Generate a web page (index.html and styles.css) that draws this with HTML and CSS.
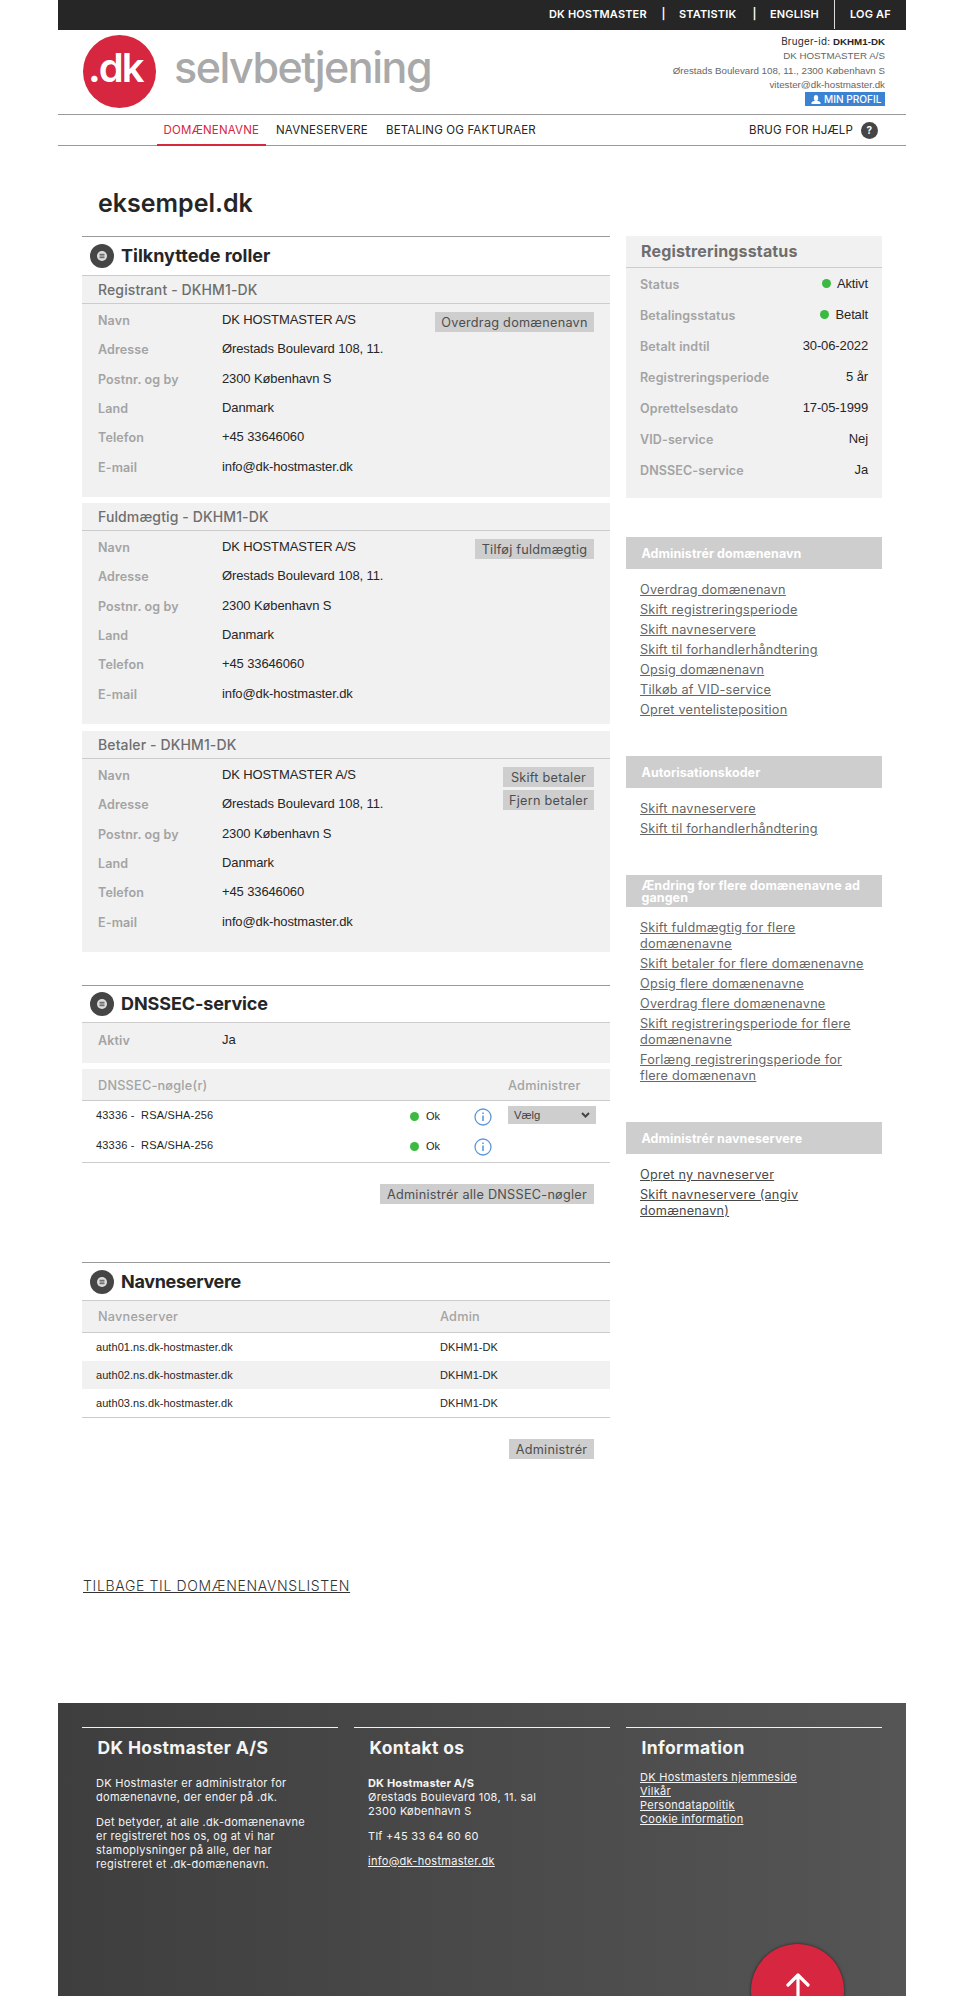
FILE: index.html
```
<!DOCTYPE html>
<html lang="da">
<head>
<meta charset="utf-8">
<title>eksempel.dk - selvbetjening</title>
<link rel="stylesheet" href="styles.css">
</head>
<body>
<svg width="0" height="0" class="defs">
  <symbol id="section-icon" viewBox="0 0 24 24">
    <circle cx="12" cy="12" r="12" fill="#454545"/>
    <circle cx="12" cy="12" r="5" fill="#ddd"/>
    <path d="M9.5 10.3h5M9.5 12h5M9.5 13.7h5" stroke="#555" stroke-width="1"/>
  </symbol>
  <symbol id="info-icon" viewBox="0 0 18 18">
    <circle cx="9" cy="9" r="8" fill="#fff" stroke="#5d98da" stroke-width="1.3"/>
    <path d="M9 7.5v5.5M9 4.6v1.3" stroke="#3c82d2" stroke-width="1.3"/>
  </symbol>
</svg>
<div class="page">
  <div class="topbar">
    <a class="t1">DK HOSTMASTER</a><span class="bar">|</span><a class="t2">STATISTIK</a><span class="bar">|</span><a class="t3">ENGLISH</a><a class="logout">LOG AF</a>
  </div>
  <header class="header">
    <div class="logo"><span class="logo-dot">.dk</span><span class="logo-name">selvbetjening</span></div>
    <div class="user">
      <div class="user-id"><span>Bruger-id:</span> <b>DKHM1-DK</b></div>
      <div>DK HOSTMASTER A/S</div>
      <div>Ørestads Boulevard 108, 11., 2300 København S</div>
      <div>vitester@dk-hostmaster.dk</div>
      <a class="profile"><svg width="10" height="9" viewBox="0 0 10 9"><ellipse cx="5" cy="3" rx="2.2" ry="3" fill="#fff"/><path d="M.5 9V7.6Q1 6.4 3.6 5.8h2.8Q9 6.4 9.5 7.6V9z" fill="#fff"/></svg>MIN PROFIL</a>
    </div>
  </header>
  <nav class="nav">
    <a class="active">DOMÆNENAVNE</a><a>NAVNESERVERE</a><a>BETALING OG FAKTURAER</a>
    <span class="help">BRUG FOR HJÆLP <i>?</i></span>
  </nav>
  <h1>eksempel.dk</h1>
  <div class="columns">
    <main class="main">
      <section>
        <h2><svg width="24" height="24"><use href="#section-icon"/></svg><span class="h-roles">Tilknyttede roller</span></h2>
        <div class="card">
          <h3>Registrant - DKHM1-DK</h3>
          <div class="card-body">
            <dl>
              <dt>Navn</dt><dd>DK HOSTMASTER A/S</dd>
              <dt>Adresse</dt><dd>Ørestads Boulevard 108, 11.</dd>
              <dt>Postnr. og by</dt><dd>2300 København S</dd>
              <dt>Land</dt><dd>Danmark</dd>
              <dt>Telefon</dt><dd>+45 33646060</dd>
              <dt>E-mail</dt><dd>info@dk-hostmaster.dk</dd>
            </dl>
            <div class="actions"><a class="btn w159">Overdrag domænenavn</a></div>
          </div>
        </div>
        <div class="card second">
          <h3>Fuldmægtig - DKHM1-DK</h3>
          <div class="card-body">
            <dl>
              <dt>Navn</dt><dd>DK HOSTMASTER A/S</dd>
              <dt>Adresse</dt><dd>Ørestads Boulevard 108, 11.</dd>
              <dt>Postnr. og by</dt><dd>2300 København S</dd>
              <dt>Land</dt><dd>Danmark</dd>
              <dt>Telefon</dt><dd>+45 33646060</dd>
              <dt>E-mail</dt><dd>info@dk-hostmaster.dk</dd>
            </dl>
            <div class="actions"><a class="btn w119">Tilføj fuldmægtig</a></div>
          </div>
        </div>
        <div class="card third">
          <h3>Betaler - DKHM1-DK</h3>
          <div class="card-body">
            <dl>
              <dt>Navn</dt><dd>DK HOSTMASTER A/S</dd>
              <dt>Adresse</dt><dd>Ørestads Boulevard 108, 11.</dd>
              <dt>Postnr. og by</dt><dd>2300 København S</dd>
              <dt>Land</dt><dd>Danmark</dd>
              <dt>Telefon</dt><dd>+45 33646060</dd>
              <dt>E-mail</dt><dd>info@dk-hostmaster.dk</dd>
            </dl>
            <div class="actions"><a class="btn w91">Skift betaler</a><a class="btn w91">Fjern betaler</a></div>
          </div>
        </div>
      </section>

      <section class="dnssec">
        <h2><svg width="24" height="24"><use href="#section-icon"/></svg><span class="h-dnssec">DNSSEC-service</span></h2>
        <dl class="active-row"><dt>Aktiv</dt><dd>Ja</dd></dl>
        <div class="key-head"><span>DNSSEC-nøgle(r)</span><span>Administrer</span></div>
        <div class="keys">
          <div class="key"><span class="algo">43336 -&nbsp; RSA/SHA-256</span><span class="ok"><i class="dot"></i>Ok</span><svg width="18" height="18"><use href="#info-icon"/></svg><span class="select">Vælg<svg width="9" height="6" viewBox="0 0 9 6"><path d="M1 1l3.5 3.5L8 1" fill="none" stroke="#444" stroke-width="2"/></svg></span></div>
          <div class="key"><span class="algo">43336 -&nbsp; RSA/SHA-256</span><span class="ok"><i class="dot"></i>Ok</span><svg width="18" height="18"><use href="#info-icon"/></svg></div>
        </div>
        <div class="after"><a class="btn w214">Administrér alle DNSSEC-nøgler</a></div>
      </section>

      <section class="servers">
        <h2><svg width="24" height="24"><use href="#section-icon"/></svg><span class="h-servers">Navneservere</span></h2>
        <div class="srv-head"><span>Navneserver</span><span>Admin</span></div>
        <div class="srv"><span>auth01.ns.dk-hostmaster.dk</span><span>DKHM1-DK</span></div>
        <div class="srv shaded"><span>auth02.ns.dk-hostmaster.dk</span><span>DKHM1-DK</span></div>
        <div class="srv last"><span>auth03.ns.dk-hostmaster.dk</span><span>DKHM1-DK</span></div>
        <div class="after"><a class="btn w85">Administrér</a></div>
      </section>
    </main>

    <aside class="side">
      <div class="status">
        <h3>Registreringsstatus</h3>
        <dl>
          <dt>Status</dt><dd><i class="dot"></i>Aktivt</dd>
          <dt>Betalingsstatus</dt><dd><i class="dot"></i>Betalt</dd>
          <dt>Betalt indtil</dt><dd>30-06-2022</dd>
          <dt>Registreringsperiode</dt><dd>5 år</dd>
          <dt>Oprettelsesdato</dt><dd>17-05-1999</dd>
          <dt>VID-service</dt><dd>Nej</dd>
          <dt>DNSSEC-service</dt><dd>Ja</dd>
        </dl>
      </div>
      <h4 class="g1">Administrér domænenavn</h4>
      <ul>
        <li><a>Overdrag domænenavn</a></li>
        <li><a>Skift registreringsperiode</a></li>
        <li><a>Skift navneservere</a></li>
        <li><a>Skift til forhandlerhåndtering</a></li>
        <li><a>Opsig domænenavn</a></li>
        <li><a>Tilkøb af VID-service</a></li>
        <li><a>Opret ventelisteposition</a></li>
      </ul>
      <h4 class="g2">Autorisationskoder</h4>
      <ul>
        <li><a>Skift navneservere</a></li>
        <li><a>Skift til forhandlerhåndtering</a></li>
      </ul>
      <h4 class="g3">Ændring for flere domænenavne ad<br>gangen</h4>
      <ul>
        <li><a>Skift fuldmægtig for flere<br>domænenavne</a></li>
        <li><a>Skift betaler for flere domænenavne</a></li>
        <li><a>Opsig flere domænenavne</a></li>
        <li><a>Overdrag flere domænenavne</a></li>
        <li><a>Skift registreringsperiode for flere<br>domænenavne</a></li>
        <li><a>Forlæng registreringsperiode for<br>flere domænenavn</a></li>
      </ul>
      <h4 class="g4">Administrér navneservere</h4>
      <ul class="dark">
        <li><a>Opret ny navneserver</a></li>
        <li><a>Skift navneservere (angiv<br>domænenavn)</a></li>
      </ul>
    </aside>
  </div>
  <a class="back">TILBAGE TIL DOMÆNENAVNSLISTEN</a>
  <footer class="footer">
    <div class="fcol">
      <h5>DK Hostmaster A/S</h5>
      <p>DK Hostmaster er administrator for<br>domænenavne, der ender på .dk.</p>
      <p>Det betyder, at alle .dk-domænenavne<br>er registreret hos os, og at vi har<br>stamoplysninger på alle, der har<br>registreret et .dk-domænenavn.</p>
    </div>
    <div class="fcol">
      <h5>Kontakt os</h5>
      <p><b>DK Hostmaster A/S</b><br>Ørestads Boulevard 108, 11. sal<br>2300 København S</p>
      <p>Tlf +45 33 64 60 60</p>
      <p><a>info@dk-hostmaster.dk</a></p>
    </div>
    <div class="fcol links">
      <h5>Information</h5>
      <p><a>DK Hostmasters hjemmeside</a><br><a>Vilkår</a><br><a>Persondatapolitik</a><br><a>Cookie information</a></p>
    </div>
    <a class="to-top"><svg width="24" height="34" viewBox="0 0 24 34"><path d="M12 33V2M2 12L12 2l10 10" fill="none" stroke="#fff" stroke-width="3.2" stroke-linecap="round" stroke-linejoin="round"/></svg></a>
  </footer>
</div>
</body>
</html>
```

FILE: styles.css
```
* { box-sizing: border-box; }
body, h1, h2, h3, h4, h5, p, ul, dl, dd { margin: 0; padding: 0; }
body {
  background: #fff;
  color: #262626;
  font-family: Inter, "Open Sans", sans-serif;
  font-size: 13px;
  height: 1996px;
  overflow: hidden;
}
i { font-style: normal; }
ul { list-style: none; }
.defs { position: absolute; }
.page { width: 848px; height: 1996px; margin: 0 auto; display: flex; flex-direction: column; overflow: hidden; }

.topbar {
  height: 30px;
  flex: none;
  background: #262626;
  color: #fff;
  display: flex;
  justify-content: flex-end;
  font-size: 11px;
  font-weight: 600;
  letter-spacing: .15px;
  line-height: 29px;
  white-space: nowrap;
}
.t1 { width: 99px; }
.bar { width: 31px; text-align: center; }
.t2 { width: 60px; }
.t3 { width: 64px; }
.logout { width: 72px; height: 29px; border-left: 1px solid #ddd; padding-left: 15px; }

.header { height: 84px; flex: none; display: flex; justify-content: space-between; padding: 5px 21px 0 25px; }
.logo { display: flex; }
.logo-dot {
  width: 73px; height: 73px;
  border-radius: 50%;
  background: #d7263f;
  color: #fff;
  font-size: 40px;
  font-weight: 600;
  line-height: 66px;
  letter-spacing: -2px;
  padding-left: 5px;
}
.logo-name { margin-left: 18px; font-size: 43px; font-weight: 500; line-height: 65px; letter-spacing: -1.5px; color: #a9a9a9; }
.user { text-align: right; font: 9.75px/14.33px "Liberation Sans", Arial, sans-serif; color: #666; display: flex; flex-direction: column; align-items: flex-end; }
.user-id { color: #262626; }
.user-id span { font-family: Inter, sans-serif; font-size: 9.8px; letter-spacing: .25px; }
.profile {
  width: 80px; height: 14px;
  background: #3c82d2; color: #fff;
  font: 500 10.1px/14px Inter, sans-serif;
  display: flex; align-items: center; gap: 3px;
  padding-left: 6px;
  white-space: nowrap;
}

.nav { height: 32px; flex: none; border-top: 1px solid #999; border-bottom: 1px solid #999; display: flex; padding-left: 99px; font-size: 11.5px; line-height: 30px; letter-spacing: .16px; white-space: nowrap; }
.nav a { height: 31px; padding: 0 6.5px; margin-right: 3.5px; width: 106.5px; }
.nav a:nth-child(3) { width: 170px; }
.nav .active { color: #d7263f; border-bottom: 2px solid #d7263f; width: 109px; position: relative; }
.help { margin-left: auto; padding-right: 28px; display: flex; align-items: center; gap: 8px; }
.help i { width: 17px; height: 17px; border-radius: 50%; background: #454545; color: #fff; font-size: 10px; font-weight: 700; line-height: 16px; text-align: center; }

h1 { font-size: 25px; font-weight: 600; line-height: 32px; margin: 41px 0 17px 40px; height: 32px; flex: none; }

.columns { display: flex; gap: 16px; height: 1338px; flex: none; margin-left: 24px; }
.main { width: 528px; }
.side { width: 256px; }

h2 { height: 40px; border-top: 1px solid #999; border-bottom: 1px solid #ccc; font-size: 18px; font-weight: 700; line-height: 38px; display: flex; align-items: center; padding-left: 8px; gap: 7px; white-space: nowrap; }
.h-roles { letter-spacing: 0; }
.h-dnssec { letter-spacing: -.1px; }
.h-servers { letter-spacing: -.32px; }
.card { height: 221px; background: #f1f1f1; }
.card.second { margin-top: 6px; }
.card.third { margin-top: 7px; }
.card h3 { height: 28px; border-bottom: 1px solid #ccc; padding-left: 16px; font-size: 14px; font-weight: 500; line-height: 28px; letter-spacing: .12px; color: #6e6e6e; }
.card-body { display: flex; justify-content: space-between; padding: 2px 16px 0; }
dl { display: grid; }
.card dl { grid-template-columns: 124px 200px; grid-auto-rows: 29.35px; line-height: 29.35px; }
dt { font-size: 12.5px; font-weight: 600; letter-spacing: .12px; color: #a3a3a3; }
dd { font-family: "Liberation Sans", Arial, sans-serif; font-size: 13px; letter-spacing: -.12px; }
.card dd { line-height: 28.5px; }
.actions { display: flex; flex-direction: column; align-items: flex-end; gap: 3px; padding-top: 6px; }
.btn { height: 20px; background: #cecece; color: #4d4d4d; font-size: 12.7px; letter-spacing: .25px; line-height: 22px; text-align: center; white-space: nowrap; display: block; }
.w159 { width: 159px; }
.w119 { width: 119px; }
.w91 { width: 91px; }
.w214 { width: 214px; }
.w85 { width: 85px; }

.dnssec { margin-top: 33px; }
.dnssec h2 { height: 38px; line-height: 36px; }
.active-row { height: 40px; background: #f1f1f1; grid-template-columns: 124px 200px; padding: 3px 16px 8px; line-height: 29px; }
.active-row dd { line-height: 27px; }
.key-head, .srv-head { height: 32px; background: #f1f1f1; border-bottom: 1px solid #ccc; font-size: 12.7px; font-weight: 500; letter-spacing: .22px; color: #a3a3a3; line-height: 32px; display: grid; grid-template-columns: 410px 1fr; padding-left: 16px; }
.key-head { margin-top: 6px; line-height: 34px; }
.keys { border-bottom: 1px solid #ccc; height: 62px; }
.key { height: 30px; display: grid; grid-template-columns: 314px 64px 34px 88px; align-items: center; padding-left: 14px; font: 11px/26px "Liberation Sans", Arial, sans-serif; }
.algo { letter-spacing: .18px; padding-bottom: 3px; }
.ok { display: flex; align-items: center; line-height: 30px; padding-bottom: 1px; }
.ok .dot { margin-right: 7px; }
.dot { display: inline-block; width: 9px; height: 9px; border-radius: 50%; background: #3cb943; }
.select { height: 18px; background: #cecece; color: #444; line-height: 18px; font-size: 11.3px; display: flex; align-items: center; justify-content: space-between; padding: 0 6px; margin-bottom: 4px; }
.after { display: flex; justify-content: flex-end; padding: 21px 16px 0 0; }

.servers { margin-top: 58px; }
.servers h2 { height: 39px; }
.srv-head { grid-template-columns: 342px 1fr; }
.srv { height: 28px; display: grid; grid-template-columns: 344px 1fr; padding-left: 14px; font: 11px/28px "Liberation Sans", Arial, sans-serif; letter-spacing: .06px; }
.shaded { background: #f1f1f1; }
.last { height: 29px; border-bottom: 1px solid #ccc; }

.status { height: 262px; background: #f1f1f1; }
.status h3 { height: 32px; border-bottom: 1px solid #ccc; padding-left: 15px; font-size: 16px; font-weight: 700; letter-spacing: .15px; line-height: 31px; color: #6e6e6e; }
.status dl { grid-template-columns: 1fr auto; grid-auto-rows: 31px; line-height: 31px; padding: 1px 14px 0 14px; }
.status dd { text-align: right; line-height: 30px; }
.status .dot { margin-right: 6px; }
h4 { height: 32px; background: #cecece; color: #fff; font-size: 12.5px; font-weight: 700; letter-spacing: .07px; line-height: 34px; padding-left: 15.5px; white-space: nowrap; }
h4.g1 { margin-top: 39px; }
h4.g2, h4.g3, h4.g4 { margin-top: 34px; }
h4.g3 { line-height: 12px; padding-top: 5px; }
.side ul { padding: 13px 0 0 14px; font-size: 12.7px; letter-spacing: .22px; line-height: 16px; color: #666; }
.side li { padding-bottom: 4px; white-space: nowrap; }
.side li a, .links a, .fcol a { text-decoration: underline; }
.side ul.dark { color: #484848; }

.back { margin: 0 0 0 25px; font-size: 14px; font-weight: 300; letter-spacing: .66px; line-height: 24px; text-decoration: underline; height: 129px; flex: none; color: #333; }

.footer {
  position: relative;
  height: 293px;
  flex: none;
  background: linear-gradient(90deg, #3e3e3e, #555);
  color: #f4f4f4;
  display: flex;
  gap: 16px;
  padding: 24px 24px 0;
}
.fcol { width: 256px; border-top: 1px solid #f0f0f0; font-size: 11px; letter-spacing: .28px; line-height: 14px; white-space: nowrap; }
.fcol b { letter-spacing: .15px; }
h5 { font-size: 17.5px; font-weight: 700; letter-spacing: .35px; line-height: 39px; height: 48px; padding-left: 15.5px; }
.fcol p { padding-left: 14px; margin-bottom: 11px; }
.links h5 { height: 42px; }
.to-top {
  position: absolute;
  left: 693px; top: 241px;
  width: 93px; height: 93px;
  border-radius: 50%;
  background: #d7263f;
  box-shadow: 0 0 3px #222;
  display: flex;
  justify-content: center;
  padding-top: 29px;
}
```
